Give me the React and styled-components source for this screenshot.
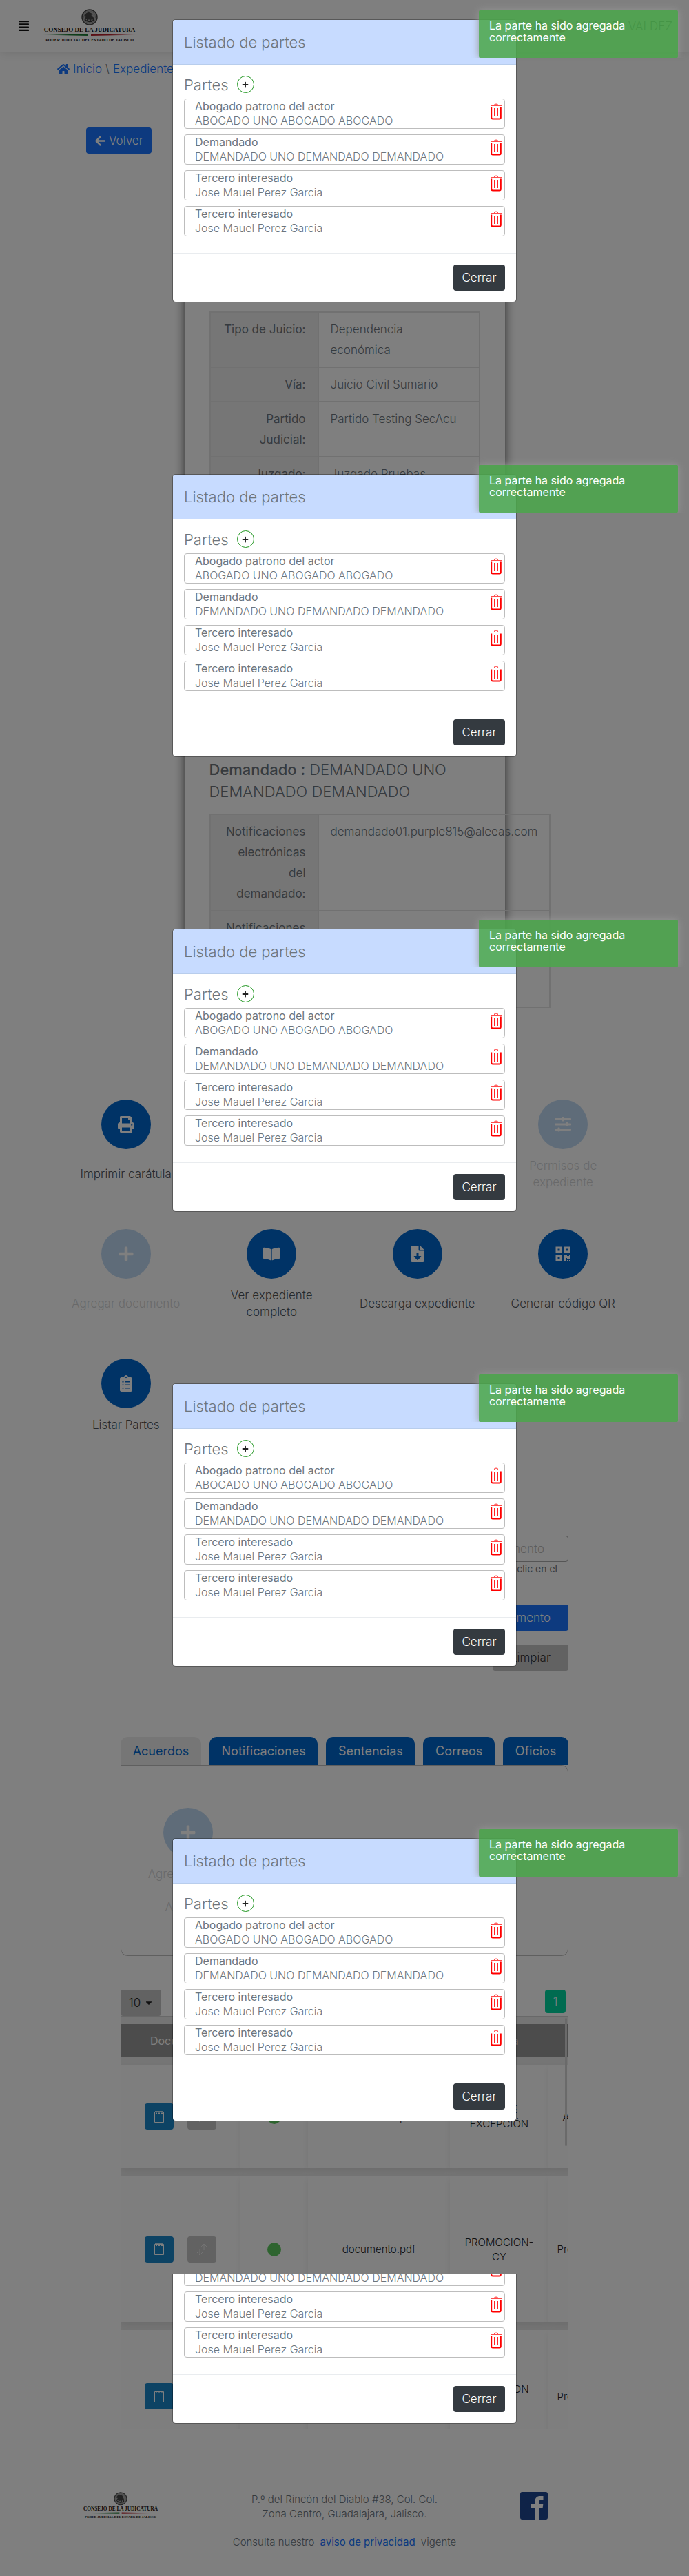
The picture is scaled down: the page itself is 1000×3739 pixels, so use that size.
import React from "react";
import styled, { createGlobalStyle, css } from "styled-components";
import {
  FaHome,
  FaArrowLeft,
  FaPrint,
  FaSlidersH,
  FaPlus,
  FaBookOpen,
  FaFileDownload,
  FaQrcode,
  FaClipboardList,
  FaAlignJustify,
  FaBell,
  FaCaretDown,
} from "react-icons/fa";

const GlobalStyle = createGlobalStyle`
  *, *::before, *::after { box-sizing: border-box; }
  body {
    margin: 0;
    background: #fff;
    color: #6c757d;
    font-family: Inter, "Open Sans", sans-serif;
    font-size: 17px;
    font-weight: 300;
    line-height: 24px;
  }
  button, input, select { font: inherit; }
  a { color: #1a74ff; text-decoration: none; }
  p, h1, h2, h3, ul { margin: 0; padding: 0; }
`;

const Page = styled.div`
  position: relative;
  overflow: hidden;
`;

const Header = styled.header`
  display: flex;
  align-items: center;
  height: 75px;
  padding: 0 24px 0 26px;
  color: #343a40;
  box-shadow: 0 0 16px rgba(0, 0, 0, 0.15);
`;

const MenuButton = styled.button`
  display: flex;
  padding: 0;
  margin: 0 16px 0 0;
  border: 0;
  background: none;
  color: #111;
`;

const UserArea = styled.div`
  display: flex;
  align-items: center;
  gap: 12px;
  margin-left: auto;
`;

const Badge = styled.span`
  width: 20px;
  height: 20px;
  border-radius: 50%;
  background: #dc3545;
  color: #fff;
  font-size: 12px;
  line-height: 20px;
  text-align: center;
`;

const Breadcrumb = styled.nav`
  display: flex;
  align-items: center;
  gap: 5px;
  padding: 13px 83px 0;

  a {
    display: flex;
    align-items: center;
    gap: 5px;
  }
`;

const BackButton = styled.button`
  display: flex;
  align-items: center;
  gap: 4px;
  height: 38px;
  margin: 73px 0 0 125px;
  padding: 0 12px;
  border: 0;
  border-radius: 4px;
  background: #1a74ff;
  color: #fff;
`;

const Card = styled.section`
  width: 465px;
  margin: 27px auto 0;
  padding: 166px 36px 36px;
  box-shadow: 0 0 14px rgba(0, 0, 0, 0.65);
`;

const CardTitle = styled.h2`
  margin-bottom: 12px;
  font-size: 20px;
  font-weight: 600;
  line-height: 24px;
  white-space: nowrap;
`;

const PartyTitle = styled.h2`
  margin: 387px 0 16px;
  font-size: 22px;
  font-weight: 300;
  line-height: 32px;

  strong { font-weight: 500; }
`;

const DataTable = styled.table`
  width: 100%;
  border: 2px solid #e2e2e2;
  border-collapse: collapse;
  line-height: 30px;

  th, td {
    padding: 9px 17px;
    border: 2px solid #e2e2e2;
    vertical-align: top;
  }
  th {
    width: 157px;
    min-width: 157px;
    background: #ececec;
    font-weight: 400;
    text-align: right;
  }
`;

const Actions = styled.section`
  display: grid;
  grid-template-columns: repeat(4, 1fr);
  row-gap: 56px;
  padding: 97px 77px 0;
`;

const ActionItem = styled.button`
  display: grid;
  grid-template-rows: 72px 1fr;
  grid-column: ${(p) => p.$column};
  gap: 12px;
  justify-items: center;
  align-items: center;
  padding: 0;
  border: 0;
  background: none;
  color: #4d5258;
  opacity: ${(p) => (p.disabled ? 0.25 : 1)};
`;

const Circle = styled.span`
  display: flex;
  align-items: center;
  justify-content: center;
  width: 72px;
  height: 72px;
  border-radius: 50%;
  background: #0066cc;
  color: #fff;
  font-size: 24px;
`;

const ActionLabel = styled.span`
  max-width: ${(p) => (p.$narrow ? "130px" : "none")};
  white-space: ${(p) => (p.$narrow ? "normal" : "nowrap")};
`;

const Content = styled.div`
  margin: 0 175px;
`;

const SearchForm = styled.form`
  display: flex;
  flex-direction: column;
  align-items: flex-end;
  padding-top: 149px;
`;

const SearchInput = styled.input`
  width: 460px;
  height: 38px;
  padding: 0 34px;
  border: 1px solid #aaa;
  border-radius: 4px;
  background: transparent;
  text-align: right;

  &::placeholder { color: #bbb; }
`;

const Hint = styled.label`
  padding-right: 16px;
  font-size: 14px;
  font-weight: 400;
  line-height: 20px;
`;

const FormButton = styled.button`
  height: 38px;
  margin-top: ${(p) => (p.$primary ? "42px" : "20px")};
  padding: 0 26px;
  border: 0;
  border-radius: 4px;
  background: ${(p) => (p.$primary ? "#1a74ff" : "#c4c4c4")};
  color: ${(p) => (p.$primary ? "#fff" : "#333")};
`;

const Tabs = styled.div`
  display: flex;
  gap: 12px;
  padding-top: 96px;
`;

const Tab = styled.button`
  flex: 1 1 auto;
  height: 41px;
  padding: 0;
  border: 0;
  border-radius: 10px 10px 0 0;
  background: ${(p) => (p.$active ? "#ededed" : "#0066cc")};
  color: ${(p) => (p.$active ? "#0066cc" : "#fff")};
  font-size: 18px;
  font-weight: 400;
`;

const TabPanel = styled.div`
  display: flex;
  height: 277px;
  padding: 61px 36px;
  border: 1px solid #bfbfbf;
  border-radius: 0 10px 10px 10px;
  text-align: center;

  ${ActionItem} {
    width: 122px;
    align-content: start;
  }
`;

const Pager = styled.div`
  display: flex;
  justify-content: space-between;
  align-items: flex-start;
  margin-top: 49px;
  padding-right: 4px;
`;

const SizePicker = styled.label`
  position: relative;
  width: 59px;
  height: 38px;

  svg {
    position: absolute;
    top: 12px;
    right: 11px;
    color: #222;
    font-size: 14px;
  }
`;

const SizeSelect = styled.select`
  width: 100%;
  height: 100%;
  padding: 0 12px;
  border: 0;
  border-radius: 4px;
  appearance: none;
  background: #c4c4c4;
  color: #222;
`;

const PageButton = styled.button`
  width: 30px;
  height: 34px;
  padding: 0;
  border: 0;
  border-radius: 4px;
  background: #00d6a0;
  color: #fff;
`;

const TableScroll = styled.div`
  position: relative;
  height: 600px;
  overflow: hidden;
  border-top: 1px solid #d0d0d0;

  &::after {
    content: "";
    position: absolute;
    top: 2px;
    right: 2px;
    width: 3px;
    height: 186px;
    border-radius: 2px;
    background: #d5d5d5;
  }
`;

const DocsTable = styled.table`
  width: 721px;
  table-layout: fixed;
  border-spacing: 0 11px;
  background: #ebebeb;
  color: #222;
  font-size: 15px;
  line-height: 21px;
  text-align: center;
  white-space: nowrap;

  th {
    height: 48px;
    padding: 0;
    border-right: 1px solid #8c8c8c;
    background: #999;
    color: #fff;
    font-size: 16px;
    font-weight: 400;
  }
  td {
    padding: 0 12px;
    background: #fdfdfd;
    box-shadow: 0 4px 10px rgba(0, 0, 0, 0.08);
  }
`;

const DocRow = styled.tr`
  height: ${(p) => p.$height}px;
`;

const RowButtons = styled.div`
  display: flex;
  justify-content: center;
  gap: 20px;
`;

const IconButton = styled.button`
  display: flex;
  align-items: center;
  justify-content: center;
  width: 42px;
  height: 38px;
  padding: 0;
  border: 0;
  border-radius: 4px;
  background: ${(p) => (p.$muted ? "#c4c4c4" : "#1a86c8")};
  color: #fff;
`;

const Dot = styled.span`
  display: inline-block;
  width: 20px;
  height: 20px;
  border-radius: 50%;
  background: #5cc85f;
  vertical-align: middle;
`;

const Footer = styled.footer`
  padding: 91px 0 39px;
  font-size: 15px;
  line-height: 21px;
  text-align: center;
`;

const FooterRow = styled.div`
  display: grid;
  grid-template-columns: 7fr 6fr 5fr 2fr;
  align-items: start;
  height: 42px;
  margin-bottom: 20px;
  white-space: nowrap;
`;

const Privacy = styled.p`
  a {
    margin: 0 4px;
    font-weight: 400;
  }
`;

const Backdrop = styled.div`
  position: absolute;
  inset: 0;
  display: flex;
  flex-direction: column;
  background: rgba(0, 0, 0, 0.5);
`;

const Frame = styled.div`
  display: flex;
  flex-direction: column;
  justify-content: flex-end;
  overflow: hidden;
  ${(p) =>
    p.$rest
      ? css`
          flex: 1 1 0;
          min-height: 0;
        `
      : css`
          flex: none;
        `}
`;

const FrameView = styled.div`
  position: relative;
  flex: none;
  height: 660px;
  padding-top: 28px;
`;

const Dialog = styled.section`
  max-width: 500px;
  margin: 0 auto;
  border: 1px solid rgba(0, 0, 0, 0.3);
  border-radius: 5px;
  background: #fff;
  background-clip: padding-box;
  overflow: hidden;
`;

const DialogHeader = styled.header`
  padding: 16px;
  border-bottom: 1px solid #b8cdec;
  background: #c7dbff;
`;

const DialogTitle = styled.h1`
  font-size: 22px;
  font-weight: 300;
  line-height: 32px;
`;

const DialogBody = styled.div`
  padding: 16px 16px 24px;
`;

const PartsHeading = styled.div`
  display: flex;
  align-items: center;
  gap: 12px;
  height: 25px;
  margin-bottom: 8px;

  h2 {
    font-size: 22px;
    font-weight: 300;
  }
`;

const AddButton = styled.button`
  display: flex;
  align-items: center;
  justify-content: center;
  width: 25px;
  height: 25px;
  padding: 0;
  border: 1px solid #1d951d;
  border-radius: 50%;
  background: #fff;
  color: #222;
  font-size: 10px;
`;

const PartList = styled.ul`
  display: grid;
  gap: 8px;
  list-style: none;
`;

const PartItem = styled.li`
  display: flex;
  align-items: center;
  justify-content: space-between;
  height: 44px;
  padding: 0 4px 0 15px;
  border: 1px solid #bdbdbd;
  border-radius: 4px;
  font-size: 16px;
  line-height: 21px;

  strong {
    display: block;
    font-weight: 400;
  }
`;

const DeleteButton = styled.button`
  display: flex;
  margin-bottom: 6px;
  padding: 0;
  border: 0;
  background: none;
`;

const DialogFooter = styled.footer`
  display: flex;
  justify-content: flex-end;
  padding: 16px;
  border-top: 1px solid #e9ecef;
`;

const CloseButton = styled.button`
  width: 75px;
  height: 38px;
  padding: 0;
  border: 0;
  border-radius: 4px;
  background: #343a40;
  color: #fff;
`;

const Toast = styled.div`
  position: absolute;
  top: 15px;
  right: 16px;
  width: 289px;
  height: 69px;
  padding: 14px 15px;
  border-radius: 2px;
  background: rgba(76, 166, 76, 0.87);
  box-shadow: 0 0 12px #999;
  clip-path: inset(-14px -14px 0 -14px);
  color: #fff;
  font-size: 16px;
  font-weight: 400;
  line-height: 17px;
`;

const parts = [
  ["Abogado patrono del actor", "ABOGADO UNO ABOGADO ABOGADO"],
  ["Demandado", "DEMANDADO UNO DEMANDADO DEMANDADO"],
  ["Tercero interesado", "Jose Mauel Perez Garcia"],
  ["Tercero interesado", "Jose Mauel Perez Garcia"],
];

const actions = [
  { label: "Imprimir carátula", icon: FaPrint, column: 1 },
  { label: "Permisos de expediente", icon: FaSlidersH, column: 4, disabled: true, narrow: true },
  { label: "Agregar documento", icon: FaPlus, column: 1, disabled: true },
  { label: "Ver expediente completo", icon: FaBookOpen, column: 2, narrow: true },
  { label: "Descarga expediente", icon: FaFileDownload, column: 3 },
  { label: "Generar código QR", icon: FaQrcode, column: 4 },
  { label: "Listar Partes", icon: FaClipboardList, column: 1 },
];

const documents = [
  { height: 150, type: ["OPONE", "EXCEPCIÓN"], note: "Acuerdo" },
  { height: 213, type: ["PROMOCION-", "CY"], note: "Promoción" },
  { height: 192, type: ["PROMOCION-", "CY"], note: "Promoción" },
];

const tabs = ["Acuerdos", "Notificaciones", "Sentencias", "Correos", "Oficios"];

function Logo({ width }) {
  return (
    <svg width={width} height={(width * 50) / 142} viewBox="0 0 142 50" role="img" aria-label="Consejo de la Judicatura">
      <defs>
        <linearGradient id="green">
          <stop offset="0" stopColor="#1d7a35" stopOpacity="0" />
          <stop offset="0.6" stopColor="#1d7a35" />
        </linearGradient>
        <linearGradient id="red">
          <stop offset="0.4" stopColor="#b5202c" />
          <stop offset="1" stopColor="#b5202c" stopOpacity="0" />
        </linearGradient>
      </defs>
      <circle cx="71" cy="12" r="11" fill="#a8a8a8" stroke="#444" strokeWidth="1.4" />
      <circle cx="71" cy="12" r="8.6" fill="none" stroke="#777" strokeDasharray="1 1" />
      <path d="M64 9c2-4 6-5 9-3l3 2-3 1c3 1 5 4 4 8l-3-3-1 4-3-3-3 3v-4l-4 1 3-4-3-1z" fill="#444" />
      <path d="M64 15c3 4 9 5 13 1" fill="none" stroke="#333" strokeWidth="1.3" />
      <text x="71" y="33" textAnchor="middle" fontFamily="Liberation Serif, serif" fontWeight="700" fontSize="9" fill="#111">
        CONSEJO DE LA JUDICATURA
      </text>
      <path d="M0 37.5L69 36v3z" fill="url(#green)" />
      <path d="M73 36l69 1.5l-69 1.5z" fill="url(#red)" />
      <text x="71" y="47" textAnchor="middle" fontFamily="Liberation Serif, serif" fontWeight="700" fontSize="6" fill="#111">
        PODER JUDICIAL DEL ESTADO DE JALISCO
      </text>
    </svg>
  );
}

function TrashIcon() {
  return (
    <svg width="16" height="24" viewBox="0 0 16 24" fill="none" stroke="#f00">
      <path d="M0 3.5h16M5.500 3c0-2.500 5-2.500 5 0" strokeWidth="1.2" opacity="0.7" />
      <path d="M1.200 5.500v15q0 2 2 2h9.600q2 0 2-2v-15" strokeWidth="2" />
      <path d="M6 7v12M10 7v12" strokeWidth="1.7" />
    </svg>
  );
}

function NotepadIcon() {
  return (
    <svg width="14" height="17" viewBox="0 0 14 17" fill="none" stroke="currentColor">
      <path d="M.5 1.500h13v15H.5z" />
      <path d="M1 1h12" strokeWidth="1.5" />
      <path d="M3 1v3M7 1v3M11 1v3" strokeWidth="2" strokeDasharray="1.5 .5" />
    </svg>
  );
}

function SwapIcon() {
  return (
    <svg width="16" height="18" viewBox="0 0 16 18" fill="none" stroke="currentColor" opacity="0.6">
      <path d="M11 10V1.500M6.500 5.500L11 1l4.500 4.500M5 8v8.500M.5 12.500L5 17l4.500-4.500" />
    </svg>
  );
}

function FacebookIcon() {
  return (
    <svg width="40" height="40" viewBox="0 0 40 40" role="img" aria-label="Facebook">
      <rect width="40" height="40" rx="3" fill="#1f4690" />
      <path d="M21.500 40V24h-5.500v-6h5.500v-4.500c0-5 3-7.500 7.500-7.500h4.500v5.500h-3c-2.500 0-3 1.200-3 3V18h5.800l-.8 6h-5v16z" fill="#fff" />
    </svg>
  );
}

function PartsDialog() {
  return (
    <FrameView>
      <Dialog role="dialog" aria-label="Listado de partes">
        <DialogHeader>
          <DialogTitle>Listado de partes</DialogTitle>
        </DialogHeader>
        <DialogBody>
          <PartsHeading>
            <h2>Partes</h2>
            <AddButton aria-label="Agregar parte">
              <FaPlus />
            </AddButton>
          </PartsHeading>
          <PartList>
            {parts.map(([role, name], i) => (
              <PartItem key={i}>
                <div>
                  <strong>{role}</strong>
                  {name}
                </div>
                <DeleteButton aria-label="Eliminar parte">
                  <TrashIcon />
                </DeleteButton>
              </PartItem>
            ))}
          </PartList>
        </DialogBody>
        <DialogFooter>
          <CloseButton>Cerrar</CloseButton>
        </DialogFooter>
      </Dialog>
      <Toast role="status">La parte ha sido agregada correctamente</Toast>
    </FrameView>
  );
}

export default function App() {
  return (
    <Page>
      <GlobalStyle />
      <Header>
        <MenuButton aria-label="Menú">
          <FaAlignJustify size={17} />
        </MenuButton>
        <Logo width={142} />
        <UserArea>
          <FaBell />
          <Badge>0</Badge>
          <span>MANUEL VALDEZ</span>
        </UserArea>
      </Header>

      <Breadcrumb>
        <a href="#inicio">
          <FaHome size={18} />
          Inicio
        </a>
        <span>\</span>
        <a href="#expediente">Expediente</a>
      </Breadcrumb>

      <BackButton>
        <FaArrowLeft />
        Volver
      </BackButton>

      <Card>
        <CardTitle>Detalles generales del expediente</CardTitle>
        <DataTable>
          <tbody>
            <tr>
              <th>Tipo de Juicio:</th>
              <td>
                Dependencia
                <br />
                económica
              </td>
            </tr>
            <tr>
              <th>Vía:</th>
              <td>Juicio Civil Sumario</td>
            </tr>
            <tr>
              <th>
                Partido
                <br />
                Judicial:
              </th>
              <td>Partido Testing SecAcu</td>
            </tr>
            <tr>
              <th>Juzgado:</th>
              <td>Juzgado Pruebas</td>
            </tr>
          </tbody>
        </DataTable>
        <PartyTitle>
          <strong>Demandado :</strong> DEMANDADO UNO
          <br />
          DEMANDADO DEMANDADO
        </PartyTitle>
        <DataTable>
          <tbody>
            <tr>
              <th>
                Notificaciones electrónicas
                <br />
                del
                <br />
                demandado:
              </th>
              <td>demandado01.purple815@aleeas.com</td>
            </tr>
            <tr>
              <th>
                Notificaciones físicas
                <br />
                del
                <br />
                demandado:
              </th>
              <td />
            </tr>
          </tbody>
        </DataTable>
      </Card>

      <Actions>
        {actions.map(({ label, icon: Icon, column, disabled, narrow }) => (
          <ActionItem key={label} $column={column} disabled={disabled}>
            <Circle>
              <Icon />
            </Circle>
            <ActionLabel $narrow={narrow}>{label}</ActionLabel>
          </ActionItem>
        ))}
      </Actions>

      <Content>
        <SearchForm>
          <SearchInput id="document" placeholder="Nombre del documento" />
          <Hint htmlFor="document">Para ver el detalle haz clic en el</Hint>
          <FormButton type="button" $primary>
            Buscar documento
          </FormButton>
          <FormButton type="reset">Limpiar</FormButton>
        </SearchForm>

        <Tabs role="tablist">
          {tabs.map((name, i) => (
            <Tab key={name} role="tab" $active={i === 0}>
              {name}
            </Tab>
          ))}
        </Tabs>
        <TabPanel>
          <ActionItem disabled>
            <Circle>
              <FaPlus />
            </Circle>
            <ActionLabel>
              Agregar nuevo
              <br />
              oficio
              <br />
              Acuerdo
            </ActionLabel>
          </ActionItem>
        </TabPanel>

        <Pager>
          <SizePicker>
            <SizeSelect aria-label="Filas por página" defaultValue="10">
              <option>10</option>
            </SizeSelect>
            <FaCaretDown />
          </SizePicker>
          <PageButton>1</PageButton>
        </Pager>
        <TableScroll>
          <DocsTable>
            <colgroup>
              <col width="174" />
              <col width="98" />
              <col width="206" />
              <col width="143" />
              <col width="100" />
            </colgroup>
            <thead>
              <tr>
                <th>Documento</th>
                <th>Estado</th>
                <th>Nombre</th>
                <th>Materia</th>
                <th>Tipo</th>
              </tr>
            </thead>
            <tbody>
              {documents.map((doc, i) => (
                <DocRow key={i} $height={doc.height}>
                  <td>
                    <RowButtons>
                      <IconButton aria-label="Ver documento">
                        <NotepadIcon />
                      </IconButton>
                      <IconButton aria-label="Mover documento" $muted>
                        <SwapIcon />
                      </IconButton>
                    </RowButtons>
                  </td>
                  <td>
                    <Dot />
                  </td>
                  <td>documento.pdf</td>
                  <td>
                    {doc.type[0]}
                    <br />
                    {doc.type[1]}
                  </td>
                  <td>{doc.note}</td>
                </DocRow>
              ))}
            </tbody>
          </DocsTable>
        </TableScroll>
      </Content>

      <Footer>
        <FooterRow>
          <div>
            <Logo width={116} />
          </div>
          <p>
            P.º del Rincón del Diablo #38, Col. Col.
            <br />
            Zona Centro, Guadalajara, Jalisco.
          </p>
          <a href="#facebook">
            <FacebookIcon />
          </a>
        </FooterRow>
        <Privacy>
          Consulta nuestro <a href="#privacidad">aviso de privacidad</a> vigente
        </Privacy>
      </Footer>

      <Backdrop>
        {[0, 1, 2, 3, 4, 5].map((n) => (
          <Frame key={n} $rest={n === 5}>
            <PartsDialog />
          </Frame>
        ))}
      </Backdrop>
    </Page>
  );
}
